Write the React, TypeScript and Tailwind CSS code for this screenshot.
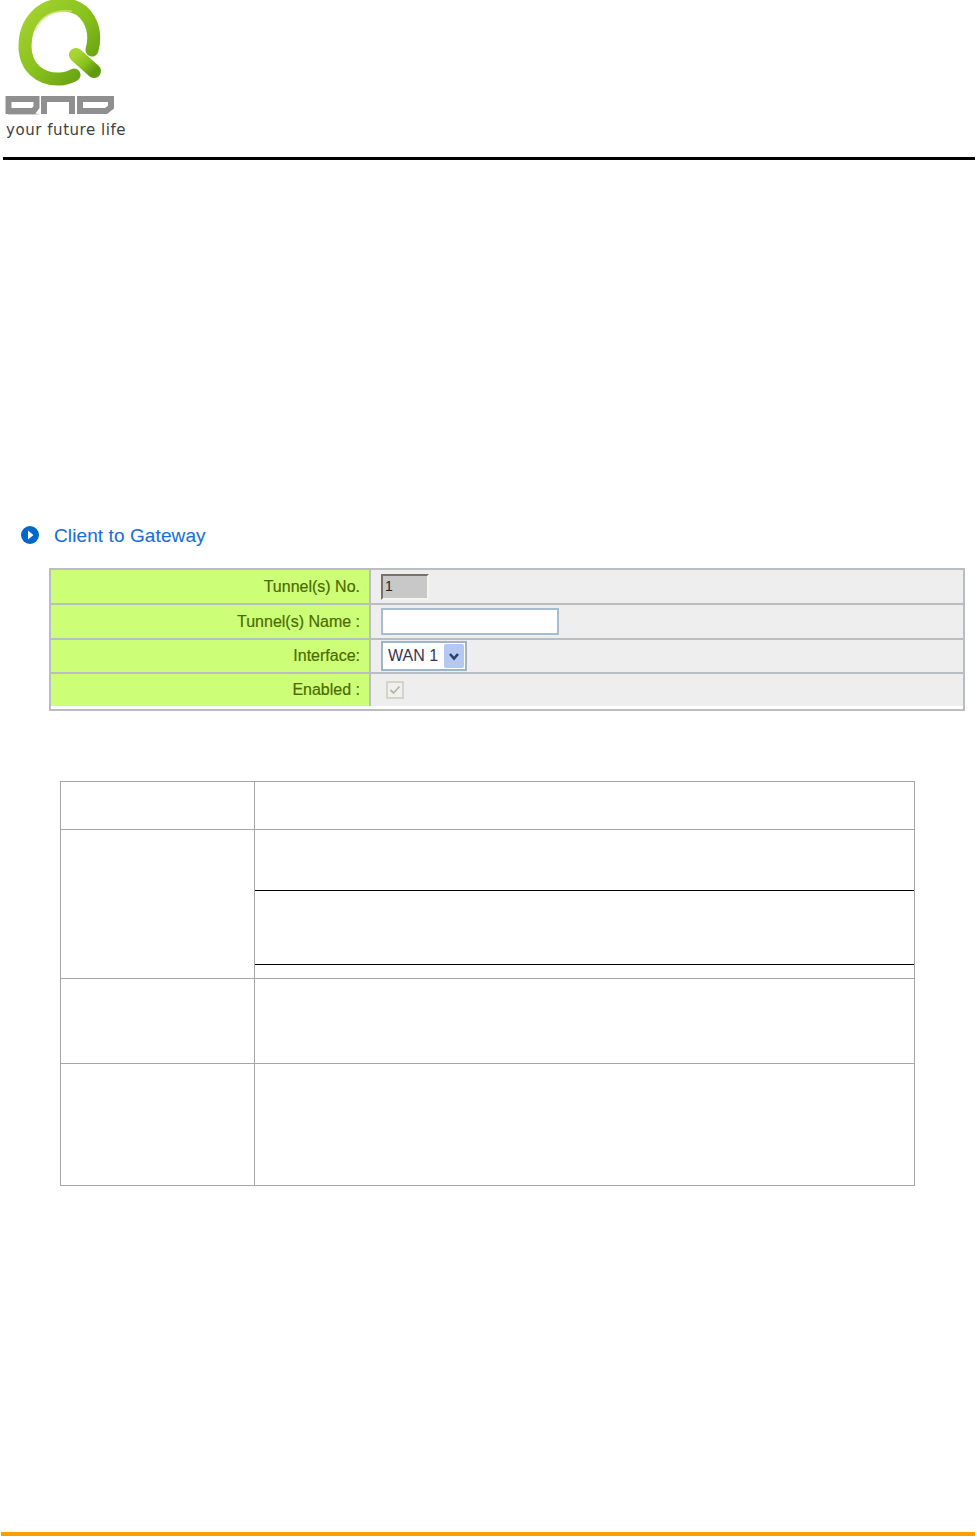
export default function App() {
  const labelCls = "flex items-center justify-end pr-[9px] bg-[#ccff77] border-r-2 border-[#b9bec3] text-[16px] text-[#4d6a00] [font-family:'Liberation_Sans',sans-serif] [-webkit-text-stroke:0.2px_#4d6a00]";
  const valueCls = "flex items-center pl-[10px] bg-[#eeeeee]";
  const hr = "border-b-2 border-[#b9bec3]";
  return (
    <div className="w-[977px] h-[1537px] bg-white flex flex-col overflow-hidden [font-family:'Liberation_Sans',sans-serif]">
      <div className="h-[157px] pl-[5px] relative">
        <svg width="112" height="118" viewBox="0 0 112 118" className="block">
          <defs>
            <linearGradient id="g" x1="0" y1="0" x2="1" y2="1">
              <stop offset="0" stopColor="#a6d431" />
              <stop offset="0.55" stopColor="#86bf1b" />
              <stop offset="1" stopColor="#5f9a10" />
            </linearGradient>
          </defs>
          <path d="M 87 50 C 93 28 82 6 60 5 C 36 4 20 22 20 46 C 20 68 36 80 55 79 C 60 79 65 77 69 75" fill="none" stroke="url(#g)" strokeWidth="13" strokeLinecap="round" />
          <path d="M 71 55 L 89 71" fill="none" stroke="url(#g)" strokeWidth="14" strokeLinecap="round" />
          <path d="M 30 30 C 36 16 50 9 66 11" fill="none" stroke="#c8e87a" strokeWidth="2" strokeLinecap="round" opacity="0.7" />
          <g fill="none" stroke="#8f8f8f" strokeWidth="6">
            <path d="M 5 100 L 5 112 L 30 112 L 33 108 L 33 100 L 5 100 Z" transform="translate(-1.5 -1)" />
            <path d="M 40 115 L 40 100 L 68 100 L 68 115" transform="translate(-1 -1)" />
            <path d="M 76 100 L 107 100 L 107 108 L 102 112 L 76 112 Z" transform="translate(-1 -1)" />
          </g>
          <path d="M 3 115 L 34 115 L 30 112 L 3 112 Z" fill="#8f8f8f" opacity="0.4" />
        </svg>
        <div className="absolute left-[6px] top-[120px] text-[15px] leading-[20px] tracking-[0.55px] text-[#3f3f3f] [font-family:'DejaVu_Sans',sans-serif] whitespace-nowrap [font-size:14px]">your future life</div>
      </div>
      <div className="ml-[3px] w-[972px] h-[3px] bg-black" />

      <div className="mt-[362px] ml-[21px] flex items-center h-[26px]">
        <svg width="18" height="18" viewBox="0 0 18 18">
          <circle cx="9" cy="9" r="9" fill="#0066cc" />
          <path d="M 7 4.5 L 12.5 9 L 7 13.5 Z" fill="white" />
        </svg>
        <span className="ml-[15px] text-[19px] font-bold text-[#1a6fd6] tracking-[0.1px] [-webkit-text-stroke:0.1px_#1a6fd6] relative top-[1px] whitespace-nowrap [font-weight:500]">Client to Gateway</span>
      </div>

      <div className="mt-[20px] ml-[49px] w-[916px] h-[143px] border-2 border-[#b9bec3] grid grid-cols-[320px_1fr] grid-rows-[35px_35px_34px_32px]">
        <div className={`${labelCls} ${hr}`}>Tunnel(s) No.</div>
        <div className={`${valueCls} ${hr}`}>
          <div className="w-[48px] h-[26px] bg-[#c8c8c8] border-2 border-t-[#77736a] border-l-[#77736a] border-r-[#f5f5f0] border-b-[#f5f5f0] flex items-center pl-[2px] text-[14px] text-[#222222]">1</div>
        </div>
        <div className={`${labelCls} ${hr}`}>Tunnel(s) Name :</div>
        <div className={`${valueCls} ${hr}`}>
          <div className="w-[178px] h-[27px] bg-white border-2 border-[#a5bcd3]" />
        </div>
        <div className={`${labelCls} ${hr}`}>Interface:</div>
        <div className={`${valueCls} ${hr}`}>
          <div className="w-[86px] h-[30px] bg-white border-2 border-[#9db4cc] flex items-center pl-[5px] pr-[1px] justify-between">
            <span className="text-[16px] text-[#3a3550]">WAN 1</span>
            <span className="w-[20px] h-[24px] bg-[#b4c8f2] rounded-[2px] flex items-center justify-center">
              <svg width="12" height="9" viewBox="0 0 12 9"><path d="M 2 2 L 6 6.5 L 10 2" fill="none" stroke="#2f3f63" strokeWidth="2.6" /></svg>
            </span>
          </div>
        </div>
        <div className={labelCls}>Enabled :</div>
        <div className={valueCls}>
          <div className="ml-[5px] w-[18px] h-[18px] bg-[#f1f1ec] border-2 border-[#d4d4cc] flex items-center justify-center">
            <svg width="12" height="10" viewBox="0 0 12 10"><path d="M 1.5 5 L 4.5 8 L 10.5 1.5" fill="none" stroke="#b5b5ac" strokeWidth="1.8" /></svg>
          </div>
        </div>
      </div>

      <div className="mt-[70px] ml-[60px] w-[855px] h-[405px] border border-[#a6a6a6] grid grid-cols-[194px_1fr] grid-rows-[48px_149px_85px_1fr]">
        <div className="border-r border-b border-[#a6a6a6]" />
        <div className="border-b border-[#a6a6a6]" />
        <div className="border-r border-b border-[#a6a6a6]" />
        <div className="border-b border-[#a6a6a6] flex flex-col">
          <div className="h-[61px] border-b border-black" />
          <div className="h-[74px] border-b border-black" />
        </div>
        <div className="border-r border-b border-[#a6a6a6]" />
        <div className="border-b border-[#a6a6a6]" />
        <div className="border-r border-[#a6a6a6]" />
        <div />
      </div>

      <div className="mt-auto mb-[1px] ml-[1px] w-[974px] h-[4px] flex">
        <div className="w-[86px] h-full bg-[#ff9c00]" />
        <div className="flex-1 h-full bg-[#ff9c00]" />
      </div>
    </div>
  );
}
